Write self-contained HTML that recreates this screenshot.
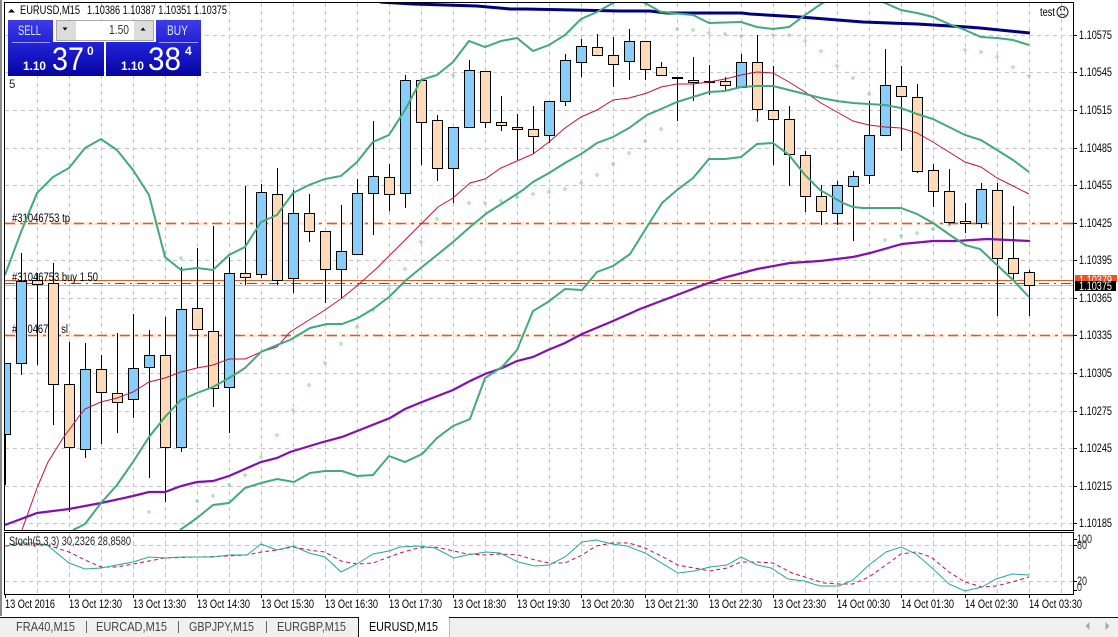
<!DOCTYPE html>
<html><head><meta charset="utf-8"><title>EURUSD,M15</title>
<style>
html,body{margin:0;padding:0;background:#fff;width:1118px;height:637px;overflow:hidden}
svg{display:block}
text{font-family:"Liberation Sans",sans-serif;font-size:11.5px;fill:#000}
.t{font-size:11.5px;fill:#222}
.tab{font-size:12.5px;fill:#444}
</style></head><body>
<svg width="1118" height="637" viewBox="0 0 1118 637" xmlns="http://www.w3.org/2000/svg">
<defs>
<linearGradient id="pg" gradientUnits="userSpaceOnUse" x1="0" y1="20" x2="0" y2="76"><stop offset="0" stop-color="#3c3ce8"/><stop offset=".45" stop-color="#2020d6"/><stop offset="1" stop-color="#0505a0"/></linearGradient>
<clipPath id="c1"><rect x="5" y="3" width="1068" height="527"/></clipPath>
<clipPath id="c2"><rect x="5" y="533" width="1068" height="61"/></clipPath>
</defs>
<rect width="1118" height="637" fill="#fff"/>
<rect x="0" y="0" width="2" height="616" fill="#8a8a8a"/>

<!-- grid -->
<path fill="none" stroke="#c4c4c4" stroke-dasharray="4 4" d="M5 35.5H1073M5 72.5H1073M5 110.5H1073M5 148.5H1073M5 185.5H1073M5 260.5H1073M5 298.5H1073M5 373.5H1073M5 411.5H1073M5 448.5H1073M5 486.5H1073M5 523.5H1073M5 545.5H1073M5 581.5H1073
M37.5 3V530M69.5 3V530M101.5 3V530M133.5 3V530M165.5 3V530M197.5 3V530M229.5 3V530M261.5 3V530M293.5 3V530M325.5 3V530M357.5 3V530M389.5 3V530M421.5 3V530M453.5 3V530M485.5 3V530M517.5 3V530M549.5 3V530M581.5 3V530M613.5 3V530M645.5 3V530M677.5 3V530M709.5 3V530M741.5 3V530M773.5 3V530M805.5 3V530M837.5 3V530M869.5 3V530M901.5 3V530M933.5 3V530M965.5 3V530M997.5 3V530M1029.5 3V530M1061.5 3V530
M37.5 533V594M69.5 533V594M101.5 533V594M133.5 533V594M165.5 533V594M197.5 533V594M229.5 533V594M261.5 533V594M293.5 533V594M325.5 533V594M357.5 533V594M389.5 533V594M421.5 533V594M453.5 533V594M485.5 533V594M517.5 533V594M549.5 533V594M581.5 533V594M613.5 533V594M645.5 533V594M677.5 533V594M709.5 533V594M741.5 533V594M773.5 533V594M805.5 533V594M837.5 533V594M869.5 533V594M901.5 533V594M933.5 533V594M965.5 533V594M997.5 533V594M1029.5 533V594M1061.5 533V594"/>

<!-- order lines -->
<path fill="none" stroke="#fbe9dc" stroke-width="3" stroke-dasharray="12 4" d="M5 223.5H1073M5 335.5H1073"/>
<path fill="none" stroke="#dc5a2c" stroke-width="1.4" stroke-dasharray="10 5 3 5" d="M5 223.5H1073M5 335.5H1073"/>
<path fill="none" stroke="#bdbdbd" d="M5 285.5H1073"/>
<path fill="none" stroke="#d9601e" d="M5 280.5H1073"/>
<path fill="none" stroke="#2f7d2f" stroke-dasharray="10 5 2 5" d="M5 283.5H1073"/>

<!-- order labels -->
<text x="12" y="222" textLength="58" lengthAdjust="spacingAndGlyphs">#31046753 tp</text>
<text x="12" y="281" textLength="86" lengthAdjust="spacingAndGlyphs">#31046753 buy 1.50</text>
<text x="12" y="333" textLength="56" lengthAdjust="spacingAndGlyphs">#31046753 sl</text>

<g clip-path="url(#c1)">
<!-- wicks -->
<path fill="none" stroke="#000" d="M5.5 434V485M21.5 253V375M37.5 273V365M53.5 263V425M69.5 342V512M85.5 343V458M101.5 355V444M117.5 333V433M133.5 314V418M149.5 330V478M165.5 317V502M181.5 267V452M197.5 248V368M213.5 226V407M229.5 257V433M245.5 186V285M261.5 184V278M277.5 168V285M293.5 190V293M309.5 194V242M325.5 231V303M341.5 205V298M357.5 179V254M373.5 121V235M389.5 164V211M405.5 75V208M421.5 80V165M437.5 115V181M453.5 127V203M469.5 60V127M485.5 71V128M501.5 96V131M517.5 114V160M533.5 106V154M549.5 101V143M565.5 54V106M581.5 39V77M597.5 34V55M613.5 37V87M629.5 29V80M645.5 41V80M661.5 62V75M677.5 77V121M693.5 57V101M709.5 65V95M725.5 77V91M741.5 54V87M757.5 35V122M773.5 66V165M789.5 106V186M805.5 151V212M821.5 185V225M837.5 181V225M853.5 171V241M869.5 101V184M885.5 49V135M901.5 66V151M917.5 84V173M933.5 164V207M949.5 169V225M965.5 203V233M981.5 183V228M997.5 183V316M1013.5 206V280M1029.5 270V316"/>
<!-- blue bodies -->
<path fill="#87cefa" stroke="#000" d="M.5 363.5h10v71h-10zM16.5 281.5h10v82h-10zM80.5 369.5h10v80h-10zM128.5 368.5h10v31h-10zM144.5 355.5h10v12h-10zM176.5 309.5h10v138h-10zM224.5 273.5h10v114h-10zM256.5 192.5h10v82h-10zM288.5 213.5h10v65h-10zM336.5 251.5h10v18h-10zM352.5 193.5h10v61h-10zM368.5 176.5h10v17h-10zM400.5 80.5h10v113h-10zM448.5 127.5h10v41h-10zM464.5 70.5h10v57h-10zM544.5 101.5h10v34h-10zM560.5 60.5h10v41h-10zM576.5 46.5h10v16h-10zM624.5 41.5h10v20h-10zM736.5 62.5h10v25h-10zM832.5 185.5h10v28h-10zM848.5 176.5h10v10h-10zM864.5 135.5h10v40h-10zM880.5 85.5h10v50h-10zM976.5 189.5h10v34h-10z"/>
<!-- orange bodies -->
<path fill="#ffdab9" stroke="#000" d="M32.5 280.5h10v4h-10zM48.5 283.5h10v101h-10zM64.5 384.5h10v63h-10zM96.5 369.5h10v23h-10zM112.5 393.5h10v9h-10zM160.5 355.5h10v92h-10zM192.5 308.5h10v21h-10zM208.5 331.5h10v57h-10zM240.5 273.5h10v4h-10zM272.5 194.5h10v86h-10zM304.5 213.5h10v18h-10zM320.5 231.5h10v38h-10zM384.5 177.5h10v17h-10zM416.5 80.5h10v42h-10zM432.5 120.5h10v48h-10zM480.5 71.5h10v51h-10zM496.5 122.5h10v3h-10zM512.5 127.5h10v2h-10zM528.5 129.5h10v7h-10zM592.5 47.5h10v8h-10zM608.5 55.5h10v9h-10zM640.5 41.5h10v28h-10zM656.5 67.5h10v8h-10zM672.5 77.5h10v1h-10zM688.5 80.5h10v2h-10zM704.5 81.5h10v1h-10zM720.5 81.5h10v4h-10zM752.5 62.5h10v47h-10zM768.5 110.5h10v9h-10zM784.5 119.5h10v35h-10zM800.5 155.5h10v41h-10zM816.5 196.5h10v15h-10zM896.5 86.5h10v10h-10zM912.5 97.5h10v74h-10zM928.5 170.5h10v21h-10zM944.5 191.5h10v31h-10zM960.5 221.5h10v2h-10zM992.5 190.5h10v68h-10zM1008.5 258.5h10v15h-10zM1024.5 272.5h10v13h-10z"/>

<!-- parabolic SAR -->
<path fill="none" stroke="#6fd06f" stroke-width=".7" d="M149 510.5l1.5 1.5-1.5 1.5-1.5-1.5zM165 250.5l1.5 1.5-1.5 1.5-1.5-1.5zM181 256.5l1.5 1.5-1.5 1.5-1.5-1.5zM197 499.5l1.5 1.5-1.5 1.5-1.5-1.5zM213 494.5l1.5 1.5-1.5 1.5-1.5-1.5zM229 483.5l1.5 1.5-1.5 1.5-1.5-1.5zM245 473.5l1.5 1.5-1.5 1.5-1.5-1.5zM261 455.5l1.5 1.5-1.5 1.5-1.5-1.5zM277 433.5l1.5 1.5-1.5 1.5-1.5-1.5zM293 408.5l1.5 1.5-1.5 1.5-1.5-1.5zM309 383.5l1.5 1.5-1.5 1.5-1.5-1.5zM325 361.5l1.5 1.5-1.5 1.5-1.5-1.5zM341 342.5l1.5 1.5-1.5 1.5-1.5-1.5zM357 325.5l1.5 1.5-1.5 1.5-1.5-1.5zM373 308.5l1.5 1.5-1.5 1.5-1.5-1.5zM389 287.5l1.5 1.5-1.5 1.5-1.5-1.5zM405 267.5l1.5 1.5-1.5 1.5-1.5-1.5zM421 240.5l1.5 1.5-1.5 1.5-1.5-1.5zM437 217.5l1.5 1.5-1.5 1.5-1.5-1.5zM453 73.5l1.5 1.5-1.5 1.5-1.5-1.5zM469 201.5l1.5 1.5-1.5 1.5-1.5-1.5zM485 201.5l1.5 1.5-1.5 1.5-1.5-1.5zM501 199.5l1.5 1.5-1.5 1.5-1.5-1.5zM517 195.5l1.5 1.5-1.5 1.5-1.5-1.5zM533 192.5l1.5 1.5-1.5 1.5-1.5-1.5zM549 190.5l1.5 1.5-1.5 1.5-1.5-1.5zM565 187.5l1.5 1.5-1.5 1.5-1.5-1.5zM581 181.5l1.5 1.5-1.5 1.5-1.5-1.5zM597 173.5l1.5 1.5-1.5 1.5-1.5-1.5zM613 162.5l1.5 1.5-1.5 1.5-1.5-1.5zM629 151.5l1.5 1.5-1.5 1.5-1.5-1.5zM645 139.5l1.5 1.5-1.5 1.5-1.5-1.5zM661 127.5l1.5 1.5-1.5 1.5-1.5-1.5zM677 27.5l1.5 1.5-1.5 1.5-1.5-1.5zM693 28.5l1.5 1.5-1.5 1.5-1.5-1.5zM709 31.5l1.5 1.5-1.5 1.5-1.5-1.5zM725 32.5l1.5 1.5-1.5 1.5-1.5-1.5zM741 34.5l1.5 1.5-1.5 1.5-1.5-1.5zM757 118.5l1.5 1.5-1.5 1.5-1.5-1.5zM773 33.5l1.5 1.5-1.5 1.5-1.5-1.5zM789 33.5l1.5 1.5-1.5 1.5-1.5-1.5zM805 39.5l1.5 1.5-1.5 1.5-1.5-1.5zM821 49.5l1.5 1.5-1.5 1.5-1.5-1.5zM837 64.5l1.5 1.5-1.5 1.5-1.5-1.5zM853 76.5l1.5 1.5-1.5 1.5-1.5-1.5zM869 92.5l1.5 1.5-1.5 1.5-1.5-1.5zM885 238.5l1.5 1.5-1.5 1.5-1.5-1.5zM901 234.5l1.5 1.5-1.5 1.5-1.5-1.5zM917 231.5l1.5 1.5-1.5 1.5-1.5-1.5zM933 227.5l1.5 1.5-1.5 1.5-1.5-1.5zM949 223.5l1.5 1.5-1.5 1.5-1.5-1.5zM965 48.5l1.5 1.5-1.5 1.5-1.5-1.5zM981 50.5l1.5 1.5-1.5 1.5-1.5-1.5zM997 55.5l1.5 1.5-1.5 1.5-1.5-1.5zM1013 65.5l1.5 1.5-1.5 1.5-1.5-1.5zM1029 74.5l1.5 1.5-1.5 1.5-1.5-1.5z"/>

<!-- red MA -->
<polyline fill="none" stroke="#c0143c" stroke-width="1" points="22,530 37,488 48,462 63,438 69,430 80,415 85,409 101,402 117,398 133,392 149,382 165,378 181,372 197,368 213,365 229,359 245,359 261,352 277,347 290,332 325,310 342,298 358,285 377,268 387,258 405,240 422,223 438,207 453,198 470,183 485,179 501,168 517,161 533,154 549,142 565,128 581,117 597,110 613,100 629,98 647,93 661,87 677,84 693,84 709,82 725,79 741,75 757,72 773,73 789,82 805,92 821,103 837,112 853,121 869,125 885,127 901,128 917,133 933,142 949,152 965,162 981,167 997,178 1013,186 1029,194"/>

<!-- purple -->
<polyline fill="none" stroke="#8010b0" stroke-width="2.2" points="5,525 37,513 69,509 101,503 133,496 149,492 165,492 181,486 197,482 213,481 229,476 245,469 261,462 277,458 290,452 323,442 342,437 390,418 405,409 422,402 453,390 470,381 485,374 502,368 517,361 533,357 548,350 565,343 582,334 613,321 640,309 677,295 703,285 723,278 757,269 790,263 820,261 853,257 870,253 902,244 933,241 957,241 987,239 1030,241"/>

<!-- navy -->
<polyline fill="none" stroke="#000080" stroke-width="3" points="380,2 413,4 445,5 477,6 510,9 525,9 573,10 620,11 650,11 667,13 742,13 750,14 800,17 863,22 917,24 967,27 980,28 1030,33"/>

<!-- bands -->
<g fill="none" stroke="#41a97c" stroke-width="2">
<polyline points="5,275 21,232 37,193 53,177 69,168 85,148 101,139 117,150 133,170 149,195 165,257 181,270 197,268 213,270 229,255 245,247 261,222 277,215 293,193 309,185 325,179 341,176 357,162 373,142 389,135 405,110 421,80 437,75 453,62 469,41 485,47 501,41 517,38 533,51 549,45 565,35 581,19 597,12 613,3 629,-4 645,3 661,12 693,15 709,23 741,22 757,27 773,29 789,27 805,15 821,4 837,-4 869,-4 885,3 901,10 917,13 933,17 949,24 965,30 981,37 997,38 1013,40 1029,45"/>
<polyline points="73,530 85,524 101,503 117,485 133,462 149,437 165,417 181,400 197,393 213,387 229,378 245,368 261,352 277,345 290,340 310,328 327,324 342,324 358,318 373,309 389,297 405,281 422,267 437,255 453,242 470,227 487,213 503,203 523,190 533,182 549,173 565,163 581,154 597,143 613,137 629,128 647,115 661,109 677,102 693,97 709,92 725,91 741,87 757,86 773,86 789,90 805,94 821,98 837,101 853,103 869,104 885,105 901,108 917,114 933,119 949,127 965,135 981,140 997,150 1013,160 1029,172"/>
<polyline points="180,530 197,518 213,505 229,503 245,488 261,483 277,479 294,482 310,473 325,471 342,471 357,476 373,475 389,456 405,462 422,454 437,438 453,426 470,419 485,378 502,367 517,350 533,311 548,302 565,289 582,290 597,272 613,266 630,254 650,222 662,203 677,190 693,178 709,159 725,159 741,157 757,144 773,143 789,155 805,175 820,190 843,203 853,207 863,208 901,208 917,214 933,223 950,235 965,245 980,249 997,265 1013,280 1029,297"/>
</g>
</g>

<!-- stochastic -->
<g clip-path="url(#c2)" fill="none">
<polyline stroke="#c0143c" stroke-dasharray="4 3" points="5,546 21,545 47,545 69,552 85,560 101,567 117,567 133,564 165,558 197,557 229,556 247,555 261,552 277,550 293,547 309,550 325,552 341,561 357,564 373,563 389,557 400,553 418,548 435,547 454,551 467,554 486,555 500,554 518,555 535,560 549,563 565,563 582,555 596,546 612,543 629,543 645,548 661,556 678,565 694,568 710,571 727,568 741,562 757,562 773,563 792,573 808,578 824,583 839,584 853,584 869,577 886,565 901,554 916,552 931,557 949,572 965,582 982,587 996,586 1012,582 1029,577"/>
<polyline stroke="#2aa5a0" points="5,546 21,543 33,543 47,545 69,563 85,569 101,568 133,562 149,557 165,558 181,557 213,557 229,555 247,555 261,544 277,550 293,546 309,553 325,557 341,572 357,564 373,554 389,551 400,547 418,546 435,548 454,558 467,555 486,552 500,553 518,562 535,566 549,565 565,557 582,542 596,540 612,544 627,546 645,553 678,573 694,571 710,567 727,565 741,557 757,565 771,568 788,579 804,581 820,586 839,586 853,580 869,565 886,552 901,547 916,554 931,567 949,584 965,591 982,587 996,579 1012,574 1029,575"/>
</g>
<text x="9" y="545" textLength="122" lengthAdjust="spacingAndGlyphs" class="t">Stoch(5,3,3) 30,2326 28,8580</text>

<!-- frames -->
<g fill="none" stroke="#000">
<path stroke-width="1" d="M4.5 2.5H1073.5V530.5H4.5Z"/>
<path stroke-width="1" d="M4.5 532.5H1073.5V594.5H4.5Z"/>
<path d="M1074 35.5h3M1074 72.5h3M1074 110.5h3M1074 148.5h3M1074 185.5h3M1074 223.5h3M1074 260.5h3M1074 298.5h3M1074 335.5h3M1074 373.5h3M1074 411.5h3M1074 448.5h3M1074 486.5h3M1074 523.5h3M1074 539.5h3M1074 545.5h3M1074 581.5h3M1074 590.5h3"/>
<path d="M5.5 595v3M69.5 595v3M133.5 595v3M197.5 595v3M261.5 595v3M325.5 595v3M389.5 595v3M453.5 595v3M517.5 595v3M581.5 595v3M645.5 595v3M709.5 595v3M773.5 595v3M837.5 595v3M901.5 595v3M965.5 595v3M1029.5 595v3"/>
</g>

<!-- price scale -->
<g class="p">
<text x="1079" y="39" textLength="33" lengthAdjust="spacingAndGlyphs">1.10575</text>
<text x="1079" y="76" textLength="33" lengthAdjust="spacingAndGlyphs">1.10545</text>
<text x="1079" y="114" textLength="33" lengthAdjust="spacingAndGlyphs">1.10515</text>
<text x="1079" y="152" textLength="33" lengthAdjust="spacingAndGlyphs">1.10485</text>
<text x="1079" y="189" textLength="33" lengthAdjust="spacingAndGlyphs">1.10455</text>
<text x="1079" y="227" textLength="33" lengthAdjust="spacingAndGlyphs">1.10425</text>
<text x="1079" y="264" textLength="33" lengthAdjust="spacingAndGlyphs">1.10395</text>
<text x="1079" y="302" textLength="33" lengthAdjust="spacingAndGlyphs">1.10365</text>
<text x="1079" y="339" textLength="33" lengthAdjust="spacingAndGlyphs">1.10335</text>
<text x="1079" y="377" textLength="33" lengthAdjust="spacingAndGlyphs">1.10305</text>
<text x="1079" y="415" textLength="33" lengthAdjust="spacingAndGlyphs">1.10275</text>
<text x="1079" y="452" textLength="33" lengthAdjust="spacingAndGlyphs">1.10245</text>
<text x="1079" y="490" textLength="33" lengthAdjust="spacingAndGlyphs">1.10215</text>
<text x="1079" y="527" textLength="33" lengthAdjust="spacingAndGlyphs">1.10185</text>
</g>
<rect x="1075" y="275" width="42" height="7" fill="#f0521c"/>
<text x="1079" y="284" textLength="33" lengthAdjust="spacingAndGlyphs" style="fill:#fff">1.10379</text>
<rect x="1075" y="281" width="41" height="10" fill="#000"/>
<text x="1079" y="290" textLength="33" lengthAdjust="spacingAndGlyphs" style="fill:#fff">1.10375</text>

<text x="1077" y="543" textLength="15" lengthAdjust="spacingAndGlyphs" class="t">100</text>
<text x="1077" y="549" textLength="10" lengthAdjust="spacingAndGlyphs" class="t">80</text>
<text x="1077" y="585" textLength="10" lengthAdjust="spacingAndGlyphs" class="t">20</text>
<text x="1077" y="591" textLength="5" lengthAdjust="spacingAndGlyphs" class="t">0</text>

<!-- time scale -->
<g class="x">
<text x="5" y="608" textLength="50" lengthAdjust="spacingAndGlyphs">13 Oct 2016</text>
<text x="69" y="608" textLength="53" lengthAdjust="spacingAndGlyphs">13 Oct 12:30</text>
<text x="133" y="608" textLength="53" lengthAdjust="spacingAndGlyphs">13 Oct 13:30</text>
<text x="197" y="608" textLength="53" lengthAdjust="spacingAndGlyphs">13 Oct 14:30</text>
<text x="261" y="608" textLength="53" lengthAdjust="spacingAndGlyphs">13 Oct 15:30</text>
<text x="325" y="608" textLength="53" lengthAdjust="spacingAndGlyphs">13 Oct 16:30</text>
<text x="389" y="608" textLength="53" lengthAdjust="spacingAndGlyphs">13 Oct 17:30</text>
<text x="453" y="608" textLength="53" lengthAdjust="spacingAndGlyphs">13 Oct 18:30</text>
<text x="517" y="608" textLength="53" lengthAdjust="spacingAndGlyphs">13 Oct 19:30</text>
<text x="581" y="608" textLength="53" lengthAdjust="spacingAndGlyphs">13 Oct 20:30</text>
<text x="645" y="608" textLength="53" lengthAdjust="spacingAndGlyphs">13 Oct 21:30</text>
<text x="709" y="608" textLength="53" lengthAdjust="spacingAndGlyphs">13 Oct 22:30</text>
<text x="773" y="608" textLength="53" lengthAdjust="spacingAndGlyphs">13 Oct 23:30</text>
<text x="837" y="608" textLength="53" lengthAdjust="spacingAndGlyphs">14 Oct 00:30</text>
<text x="901" y="608" textLength="53" lengthAdjust="spacingAndGlyphs">14 Oct 01:30</text>
<text x="965" y="608" textLength="53" lengthAdjust="spacingAndGlyphs">14 Oct 02:30</text>
<text x="1029" y="608" textLength="53" lengthAdjust="spacingAndGlyphs">14 Oct 03:30</text>
</g>

<!-- header -->
<path d="M8 12.5l3.5-3.5 3.5 3.5z" fill="#000"/>
<text x="20" y="14" textLength="60" lengthAdjust="spacingAndGlyphs">EURUSD,M15</text>
<text x="87" y="14" textLength="140" lengthAdjust="spacingAndGlyphs">1.10386 1.10387 1.10351 1.10375</text>
<text x="9" y="88" class="t">5</text>
<text x="1040" y="16" textLength="15" lengthAdjust="spacingAndGlyphs">test</text>
<circle cx="1062.5" cy="12" r="5.5" fill="none" stroke="#222"/>
<path d="M1059.5 15.5q3-2.5 6 0" fill="none" stroke="#222" stroke-width=".9"/>
<path d="M1060 8.5h1.5v2H1060zM1063.5 8.5h1.5v2h-1.5z" fill="#222"/>

<!-- trade panel -->
<path fill="url(#pg)" d="M8 20H53V42H104V76H8Z"/>
<path fill="url(#pg)" d="M156 20H201V76H106V42H156Z"/>
<path stroke="#9a9af0" d="M12 42.5H50M159 42.5H198" fill="none"/>
<rect x="53" y="20" width="3" height="22" fill="#fff"/>
<rect x="154" y="20" width="2" height="22" fill="#fff"/>
<rect x="56.5" y="20.5" width="97" height="20" fill="#fff" stroke="#a8a8a8"/>
<rect x="57" y="21" width="19" height="19" fill="#dcdcdc"/>
<rect x="134" y="21" width="19" height="19" fill="#dcdcdc"/>
<path d="M62.5 27.5h5l-2.5 3z M140.5 30.5h5l-2.5-3z" fill="#000"/>
<text x="18" y="35" textLength="23" lengthAdjust="spacingAndGlyphs" style="font-size:14px;fill:#dfe2ff">SELL</text>
<text x="167" y="35" textLength="21" lengthAdjust="spacingAndGlyphs" style="font-size:14px;fill:#dfe2ff">BUY</text>
<text x="109" y="34" textLength="20" lengthAdjust="spacingAndGlyphs" style="font-size:13px;fill:#333">1.50</text>
<g style="fill:#fff">
<text x="23" y="70" textLength="23" lengthAdjust="spacingAndGlyphs" style="font-size:12px;font-weight:bold;fill:#fff">1.10</text>
<text x="52" y="70" textLength="32" lengthAdjust="spacingAndGlyphs" style="font-size:32px;fill:#fff">37</text>
<text x="87" y="55" style="font-size:12px;font-weight:bold;fill:#fff">0</text>
<text x="121" y="70" textLength="23" lengthAdjust="spacingAndGlyphs" style="font-size:12px;font-weight:bold;fill:#fff">1.10</text>
<text x="148" y="70" textLength="33" lengthAdjust="spacingAndGlyphs" style="font-size:32px;fill:#fff">38</text>
<text x="185" y="55" style="font-size:12px;font-weight:bold;fill:#fff">4</text>
</g>

<!-- tabs -->
<rect x="0" y="617" width="1118" height="20" fill="#f0f0f0"/>
<rect x="0" y="617" width="1118" height="1" fill="#111"/>
<rect x="358" y="617" width="91" height="20" fill="#fff"/>
<path d="M358.5 617V637" stroke="#111" fill="none"/>
<path d="M449.5 618V637" stroke="#bbb" fill="none"/>
<path d="M86.5 621V633M178.5 621V633M266.5 621V633" stroke="#666" fill="none"/>
<text x="16" y="631" textLength="59" lengthAdjust="spacingAndGlyphs" class="tab">FRA40,M15</text>
<text x="96" y="631" textLength="71" lengthAdjust="spacingAndGlyphs" class="tab">EURCAD,M15</text>
<text x="189" y="631" textLength="65" lengthAdjust="spacingAndGlyphs" class="tab">GBPJPY,M15</text>
<text x="277" y="631" textLength="69" lengthAdjust="spacingAndGlyphs" class="tab">EURGBP,M15</text>
<text x="369" y="631" textLength="69" lengthAdjust="spacingAndGlyphs" style="font-size:12.5px;fill:#000">EURUSD,M15</text>
<path d="M1089.5 622v8l-4-4zM1105.5 622v8l4-4z" fill="#a8a8a8"/>
</svg>
</body></html>
